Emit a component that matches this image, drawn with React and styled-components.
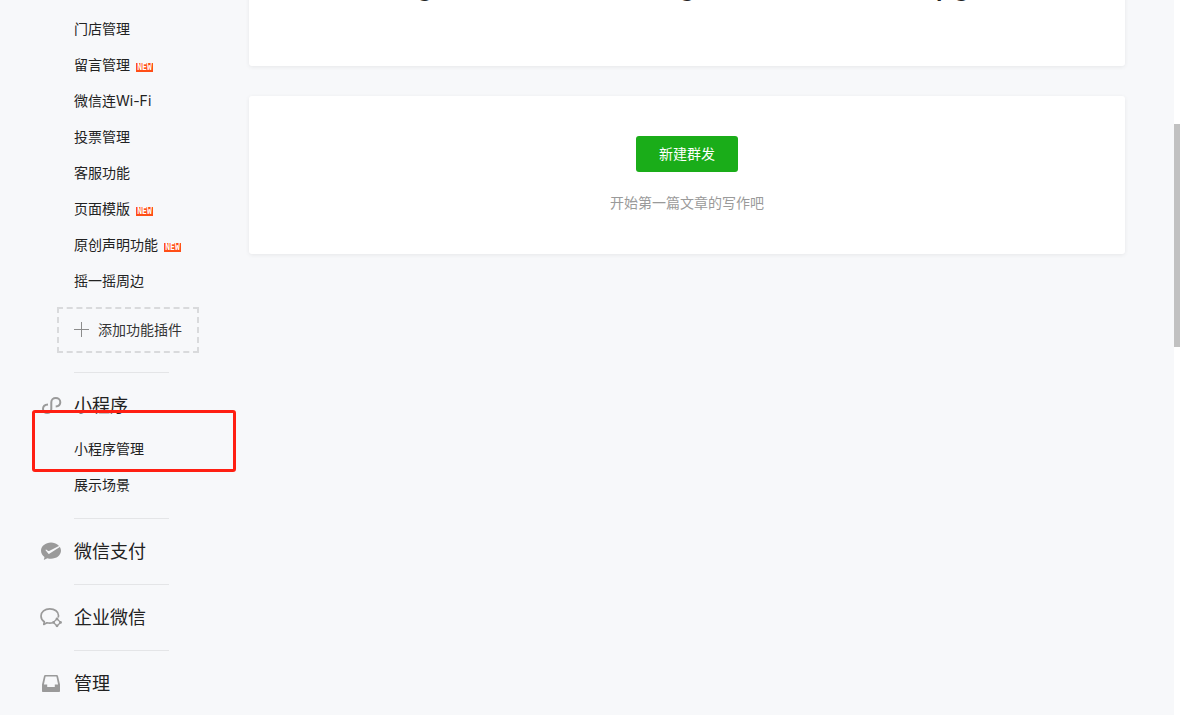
import React from 'react'
import styled, { createGlobalStyle } from 'styled-components'

const plugins = [
  { name: '门店管理' },
  { name: '留言管理', isNew: true },
  { name: '微信连Wi-Fi' },
  { name: '投票管理' },
  { name: '客服功能' },
  { name: '页面模版', isNew: true },
  { name: '原创声明功能', isNew: true },
  { name: '摇一摇周边' }
]

const stats = [0, 0, 10]

const MiniProgramIcon = () => (
  <Icon viewBox="0 0 22 22">
    <path
      d="M8 10.6C5 10.8 3 12.7 3 15.1c0 2.3 1.8 4 4.2 4 2.3 0 4.1-1.7 4.1-4V8.3c0-2.5 1.9-4.3 4.5-4.3s4.5 1.8 4.5 4.2c0 2.3-1.8 4.1-4.6 4.3"
      fill="none" stroke="#9a9a9a" strokeWidth="2"
    />
  </Icon>
)

const PayIcon = () => (
  <Icon viewBox="0 0 22 22">
    <path
      d="M11 2.6C5.5 2.600 1 6.200 1 10.800c0 2.600 1.400 4.700 3.500 6.200L3.800 20l3.600-1.800c1.100.4 2.300.6 3.600.6 5.500 0 10-3.600 10-8S16.500 2.600 11 2.600z"
      fill="#9a9a9a"
    />
    <path d="M5.400 10l2.800 3.600c.3.300.6.400 1.100.1L20.200 6.800l-.8-1L9.100 11c-.3.200-.6.100-.9-.1L6.100 9.500z" fill="#f7f8fa" />
  </Icon>
)

const WorkIcon = () => (
  <Icon viewBox="0 0 22 22">
    <path
      d="M18.200 11.500c.2-.7.3-1.300.3-2C18.500 5.800 14.800 2.800 9.800 2.800S1 5.900 1 9.900c0 2.500 1.300 4.500 3.300 5.800L3.800 18.500l3.100-1.700c1.900.5 4 .5 5.700 0"
      fill="none" stroke="#9a9a9a" strokeWidth="1.7" strokeLinejoin="round"
    />
    <path
      d="M17 12.800l3.500 3.600-3.500 3.600-3.500-3.600z"
      fill="none" stroke="#9a9a9a" strokeWidth="1.3"
    />
    <g fill="#9a9a9a">
      <circle cx="17" cy="13" r="1.400" />
      <circle cx="20.500" cy="16.400" r="1.400" />
      <circle cx="17" cy="19.800" r="1.400" />
      <circle cx="13.500" cy="16.400" r="1.400" />
    </g>
  </Icon>
)

const ManageIcon = () => (
  <Icon viewBox="0 0 22 22">
    <path
      fillRule="evenodd"
      d="M5.200 3h11.600c.6 0 1 .3 1.200.9L20 12.500V19c0 .6-.4 1-1 1H3c-.6 0-1-.4-1-1v-6.500L4 3.900c.2-.6.6-.9 1.200-.9zM5.600 4.600L3.900 12.500h3.300V15h7.600v-2.500h3.300L16.400 4.600z"
      fill="#9a9a9a"
    />
  </Icon>
)

const App = () => (
  <>
    <GlobalStyle />
    <Page>
      <Sidebar>
        <MenuList>
          {plugins.map(item => (
            <MenuItem key={item.name}>
              <MenuLink href="#">
                {item.name}
                {item.isNew && <NewTag>NEW</NewTag>}
              </MenuLink>
            </MenuItem>
          ))}
        </MenuList>
        <AddPlugin href="#">
          <Plus viewBox="0 0 15 15">
            <path d="M7.500 0v15M0 7.500h15" stroke="#8c8c8c" />
          </Plus>
          添加功能插件
        </AddPlugin>

        <Group>
          <GroupTitle><MiniProgramIcon />小程序</GroupTitle>
          <MenuList $spaced>
            <MenuItem>
              <MenuLink href="#">小程序管理</MenuLink>
              <Highlight />
            </MenuItem>
            <MenuItem>
              <MenuLink href="#">展示场景</MenuLink>
            </MenuItem>
          </MenuList>
        </Group>
        <Group>
          <GroupTitle><PayIcon />微信支付</GroupTitle>
        </Group>
        <Group>
          <GroupTitle><WorkIcon />企业微信</GroupTitle>
        </Group>
        <Group>
          <GroupTitle><ManageIcon />管理</GroupTitle>
        </Group>
      </Sidebar>

      <Main>
        <StatsCard>
          {stats.map((value, index) => (
            <Stat key={index}>{value}</Stat>
          ))}
        </StatsCard>
        <EmptyCard>
          <SendButton type="button">新建群发</SendButton>
          <Tip>开始第一篇文章的写作吧</Tip>
        </EmptyCard>
      </Main>

      <ScrollTrack>
        <ScrollThumb />
      </ScrollTrack>
    </Page>
  </>
)

const GlobalStyle = createGlobalStyle`
  * {
    box-sizing: border-box;
  }

  body {
    margin: 0;
    background: #f7f8fa;
    color: #222;
    font-family: Inter, "Noto Sans CJK SC", sans-serif;
    font-size: 14px;
    overflow: hidden;
  }

  a {
    color: inherit;
    text-decoration: none;
  }
`

const Page = styled.div`
  display: flex;
  height: 100vh;
  overflow: hidden;
`

const Sidebar = styled.nav`
  flex: 0 0 249px;
  padding-top: 11px;
`

const MenuList = styled.ul`
  list-style: none;
  margin: ${props => (props.$spaced ? '12px' : '0')} 0 0;
  padding: 0;
`

const MenuItem = styled.li`
  position: relative;
  padding-left: 74px;
`

const MenuLink = styled.a`
  display: flex;
  align-items: center;
  height: 36px;
  line-height: 36px;
`

const NewTag = styled.span`
  width: 17px;
  height: 9px;
  margin: 4px 0 0 6px;
  background: #ff4e17;
  color: white;
  font: bold 8px/9px "DejaVu Sans Mono", monospace;
  text-align: center;
`

const AddPlugin = styled.a`
  display: flex;
  align-items: center;
  gap: 9px;
  width: 142px;
  height: 46px;
  margin: 8px 0 19px 57px;
  padding: 0 0 2px 15px;
  border: 2px dashed #d9dadc;
  color: #353535;
`

const Plus = styled.svg`
  width: 15px;
  height: 15px;
`

const Icon = styled.svg`
  width: 22px;
  height: 22px;
  margin-top: 1px;
`

const Group = styled.section`
  padding-bottom: 15px;

  &::before {
    content: '';
    display: block;
    width: 95px;
    height: 1px;
    margin: 0 0 20px 74px;
    background: #e4e5e7;
  }
`

const GroupTitle = styled.h2`
  display: flex;
  align-items: flex-start;
  gap: 12px;
  margin: 0 0 4px;
  padding-left: 40px;
  font-size: 18px;
  font-weight: 400;
  line-height: 26px;
`

/* red frame lying over the menu */
const Highlight = styled.div`
  position: absolute;
  top: -21px;
  right: 13px;
  bottom: -5px;
  left: 32px;
  border: 3px solid #ff1f12;
  border-radius: 3px;
  pointer-events: none;
`

const Main = styled.main`
  flex: 1;
  margin-top: -75px;
  padding-right: 49px;
`

const Card = styled.section`
  background: white;
  border-radius: 3px;
  box-shadow: 0 1px 4px rgba(0, 0, 0, .07);
`

const StatsCard = styled(Card)`
  display: flex;
  margin-bottom: 30px;
  padding: 40px 44px 59px;
`

const Stat = styled.div`
  flex: 1;
  font-family: "Open Sans", sans-serif;
  font-size: 40px;
  line-height: 42px;
  text-align: center;
`

const EmptyCard = styled(Card)`
  display: flex;
  flex-direction: column;
  align-items: center;
  padding: 40px 0;
`

const SendButton = styled.button`
  width: 102px;
  height: 36px;
  padding: 0 0 2px;
  border: 0;
  border-radius: 3px;
  background: #1aad19;
  color: white;
  font: inherit;
`

const Tip = styled.p`
  margin: 20px 0 0;
  color: #9a9a9a;
  line-height: 22px;
`

const ScrollTrack = styled.div`
  flex: 0 0 6px;
  background: white;
`

const ScrollThumb = styled.div`
  height: 223px;
  margin-top: 124px;
  background: #c1c1c1;
`

export default App
